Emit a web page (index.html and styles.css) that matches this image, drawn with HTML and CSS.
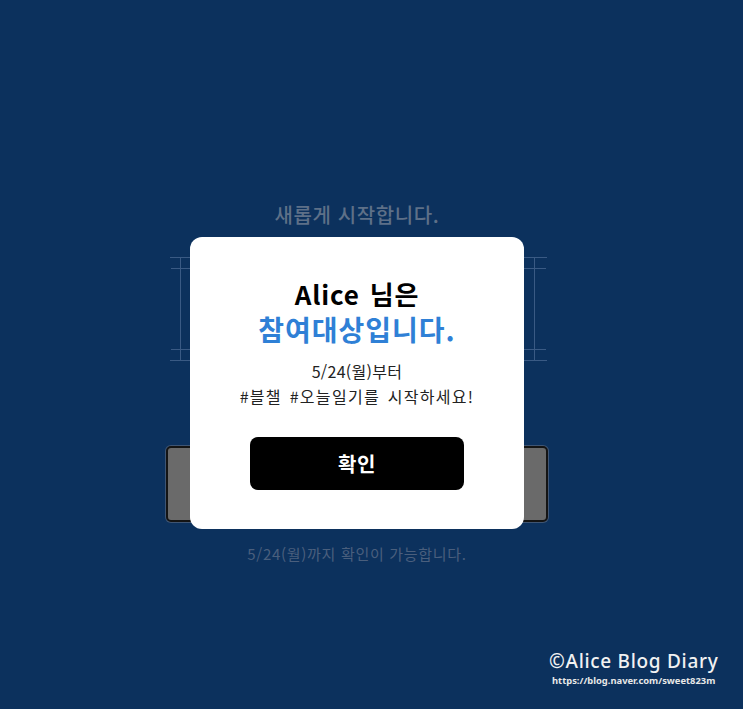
FILE: index.html
```html
<!DOCTYPE html>
<html lang="ko">
<head>
<meta charset="utf-8">
<link rel="stylesheet" href="styles.css">
</head>
<body>
<div class="page">
  <div class="stage">
    <h1 class="headline">새롭게 시작합니다.</h1>
    <div class="grid">
      <div class="grid-v">
        <div class="grid-h"></div>
      </div>
    </div>
    <div class="ghost-btn"></div>
    <p class="deadline">5/24(월)까지 확인이 가능합니다.</p>

    <div class="modal">
      <div class="modal-title">Alice 님은</div>
      <div class="modal-sub">참여대상입니다.</div>
      <p class="modal-text"><span class="line-date">5/24(월)부터</span><span class="line-tags">#블챌 #오늘일기를 시작하세요!</span></p>
      <button class="modal-btn">확인</button>
    </div>
  </div>
  <div class="watermark">
    <div class="wm-title">©Alice Blog Diary</div>
    <div class="wm-url">https://blog.naver.com/sweet823m</div>
  </div>
</div>
</body>
</html>
```
FILE: styles.css
```css
html, body {
  margin: 0;
  padding: 0;
}
body {
  background: #0c315d;
  font-family: "Noto Sans CJK KR", "Noto Sans", sans-serif;
  width: 743px;
  height: 709px;
  overflow: hidden;
}
.page {
  position: relative;
  width: 743px;
  height: 709px;
}
.stage {
  position: relative;
  width: 714px;
  display: flex;
  flex-direction: column;
  align-items: center;
  padding-top: 201px;
}
.headline {
  margin: 0;
  font-size: 20px;
  line-height: 28px;
  font-weight: 500;
  color: #5e7088;
  letter-spacing: 0.6px;
}
.grid {
  margin-top: 28px;
  width: 377px;
  height: 102px;
  border-top: 1px solid #3a5a84;
  border-bottom: 1px solid #3a5a84;
  margin-left: 2px;
}
.grid-v {
  height: 100%;
  margin: 0 12px 0 10px;
  border-left: 1px solid #3a5a84;
  border-right: 1px solid #3a5a84;
  display: flex;
  flex-direction: column;
}
.grid-h {
  margin: 10px -12px 0 -10px;
  height: 80px;
  border-top: 1px solid #3a5a84;
  border-bottom: 1px solid #3a5a84;
}
.ghost-btn {
  margin-top: 85px;
  width: 378px;
  height: 72px;
  background: #6a6a6a;
  border: 2px solid #141414;
  border-radius: 5px;
  box-shadow: 0 0 0 1px #3f5573;
}
.deadline {
  margin: 22px 0 0;
  font-size: 15px;
  line-height: 20px;
  color: #4a5f7d;
  letter-spacing: 0.7px;
}
.modal {
  position: absolute;
  left: 190px;
  top: 237px;
  width: 334px;
  height: 292px;
  background: #ffffff;
  border-radius: 12px;
  display: flex;
  flex-direction: column;
  align-items: center;
  box-sizing: border-box;
  padding-top: 40px;
}
.modal-title {
  font-size: 26px;
  line-height: 34px;
  font-weight: 700;
  color: #000;
  letter-spacing: 0.8px;
  word-spacing: 2px;
}
.modal-sub {
  font-size: 28px;
  line-height: 36px;
  font-weight: 700;
  color: #2f80d6;
  letter-spacing: 1px;
}
.modal-text {
  margin: 12px 0 0;
  font-size: 16px;
  line-height: 25px;
  color: #222;
  text-align: center;
  display: flex;
  flex-direction: column;
  align-items: center;
}
.line-date {
  letter-spacing: 0.3px;
}
.line-tags {
  letter-spacing: 1.3px;
  word-spacing: 2px;
}
.modal-btn {
  margin-top: 28px;
  width: 214px;
  height: 53px;
  border: none;
  border-radius: 8px;
  background: #000;
  color: #fff;
  font-family: "Noto Sans CJK KR", sans-serif;
  font-size: 20px;
  font-weight: 700;
  letter-spacing: 0.5px;
  cursor: pointer;
}
.watermark {
  position: absolute;
  left: 549px;
  top: 650px;
  display: flex;
  flex-direction: column;
  color: #fff;
}
.wm-title {
  font-family: "Noto Sans", sans-serif;
  font-size: 19px;
  line-height: 22px;
  font-weight: 500;
  letter-spacing: 0.7px;
  color: #f2f2f2;
}
.wm-url {
  margin-top: 3px;
  margin-left: 3px;
  font-family: "Noto Sans", sans-serif;
  font-size: 9.4px;
  line-height: 11px;
  font-weight: 700;
  color: #e8e8e8;
}
```
